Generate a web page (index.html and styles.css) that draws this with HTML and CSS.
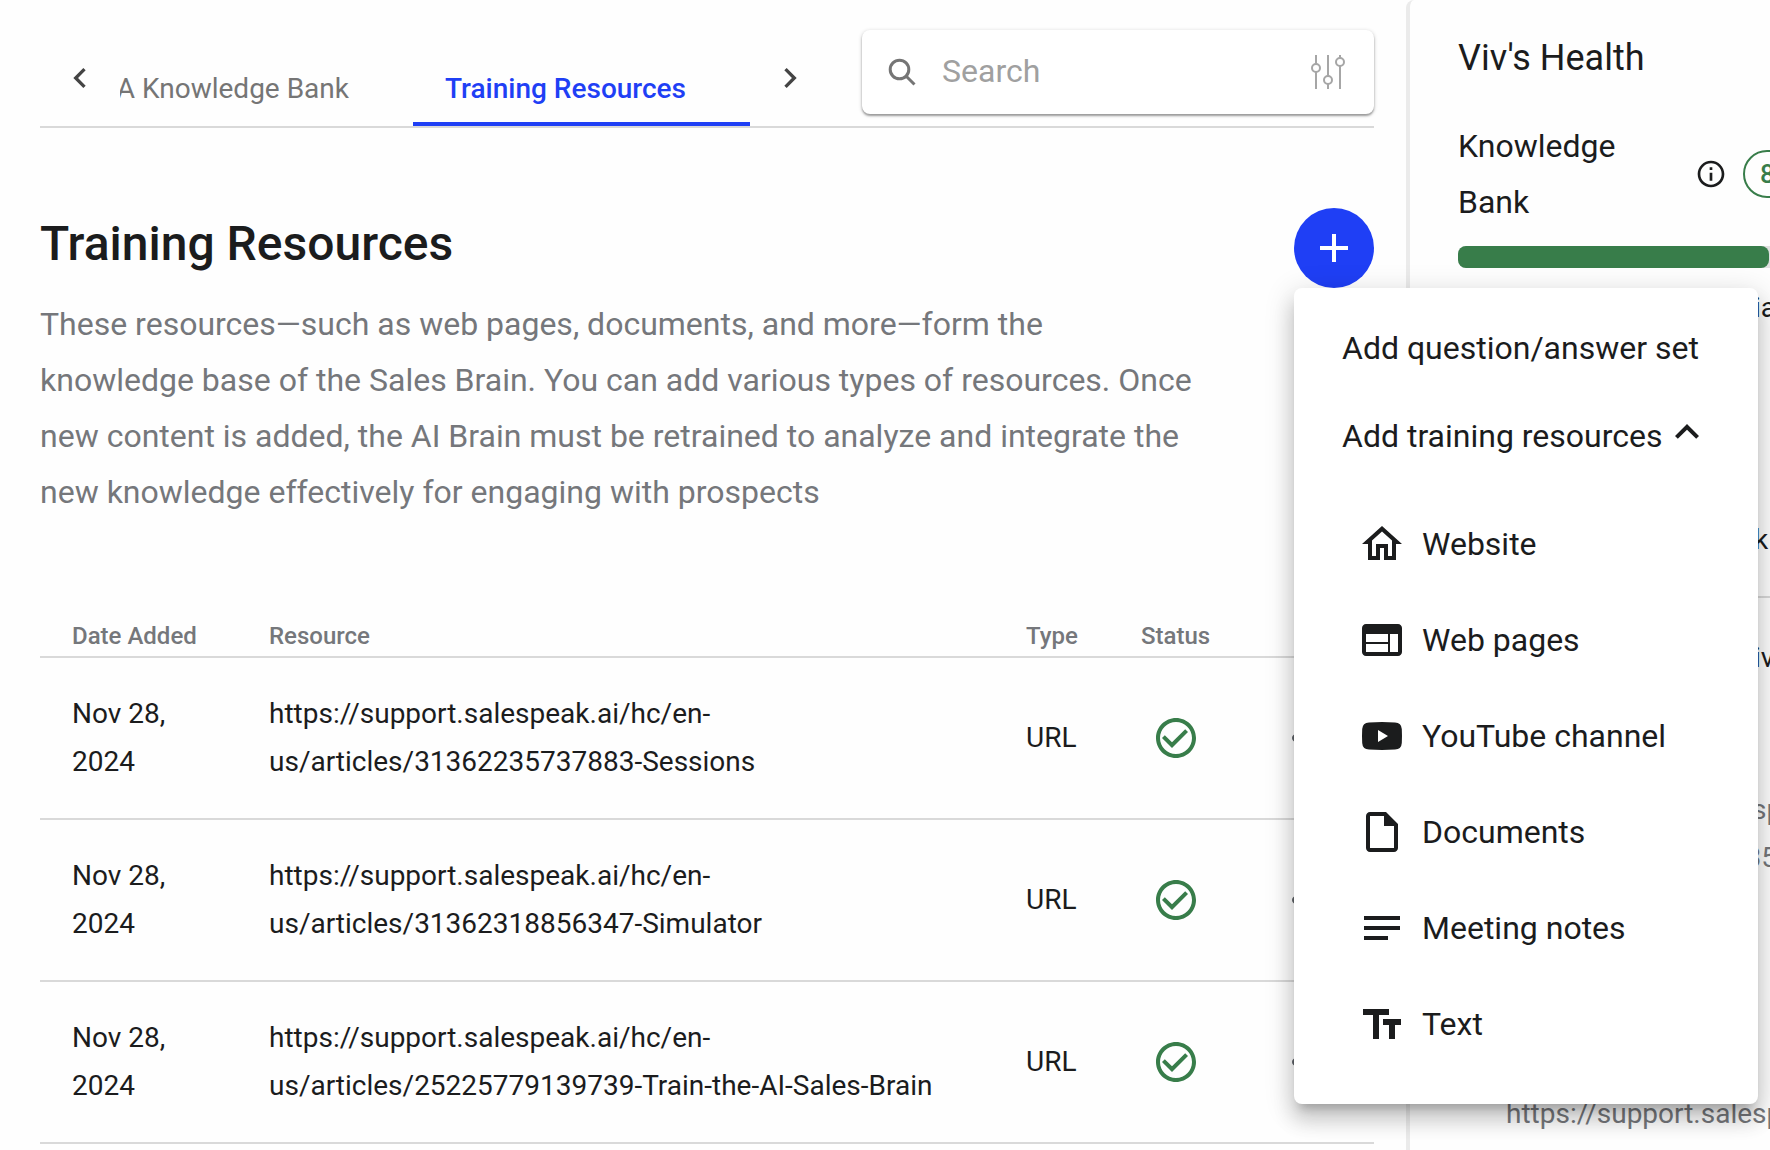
FILE: index.html
```html
<!DOCTYPE html>
<html lang="en">

<head>
    <meta charset="utf-8">
    <meta name="viewport" content="width=device-width, initial-scale=1.0">
    <title>Training Resources</title>
    <link rel="stylesheet" href="styles.css">
</head>

<body>
    <!-- shared icons -->
    <svg class="sprite" aria-hidden="true">
        <symbol id="check" viewBox="0 0 24 24">
            <path d="M16.59 7.58 10 14.17l-3.59-3.58L5 12l5 5 8-8zM12 2C6.48 2 2 6.48 2 12s4.48 10 10 10 10-4.48 10-10S17.52 2 12 2m0 18c-4.42 0-8-3.58-8-8s3.58-8 8-8 8 3.58 8 8-3.58 8-8 8" />
        </symbol>
        <symbol id="more" viewBox="0 0 24 24">
            <path d="M6 10c-1.1 0-2 .9-2 2s.9 2 2 2 2-.9 2-2-.9-2-2-2m12 0c-1.1 0-2 .9-2 2s.9 2 2 2 2-.9 2-2-.9-2-2-2m-6 0c-1.1 0-2 .9-2 2s.9 2 2 2 2-.9 2-2-.9-2-2-2" />
        </symbol>
    </svg>

    <div class="page">
        <main class="content">
            <header class="topbar">
                <nav class="tabs">
                    <button class="tab_arrow" aria-label="Previous tabs">
                        <svg viewBox="0 0 24 24"><path d="M15.41 16.59 10.83 12l4.58-4.59L14 6l-6 6 6 6z" /></svg>
                    </button>
                    <div class="tab_list">
                        <button class="tab">Q&amp;A Knowledge Bank</button>
                        <button class="tab active">Training Resources</button>
                    </div>
                    <button class="tab_arrow" aria-label="Next tabs">
                        <svg viewBox="0 0 24 24"><path d="M8.59 16.59 13.17 12 8.59 7.41 10 6l6 6-6 6z" /></svg>
                    </button>
                </nav>
                <div class="search">
                    <svg class="search_icon" viewBox="0 0 28 28">
                        <circle cx="11.5" cy="11.5" r="9.3" />
                        <path d="M18 18 26.500 26.500" />
                    </svg>
                    <input type="text" placeholder="Search" aria-label="Search">
                    <button class="filter" aria-label="Filters">
                        <svg viewBox="0 0 36 36">
                            <path d="M6 1v9M6 18v17M18 1v21M18 30v5M30 1v3M30 12v23" />
                            <circle cx="6" cy="14" r="4" />
                            <circle cx="18" cy="26" r="4" />
                            <circle cx="30" cy="8" r="4" />
                        </svg>
                    </button>
                </div>
            </header>

            <section class="intro">
                <div class="intro_text">
                    <h1>Training Resources</h1>
                    <p>These resources—such as web pages, documents, and more—form the knowledge base of the Sales Brain. You can add various types of resources. Once new content is added, the AI Brain must be retrained to analyze and integrate the new knowledge effectively for engaging with prospects</p>
                </div>
                <div class="add">
                    <button class="add_button" aria-label="Add">
                        <svg viewBox="0 0 28 28"><path d="M14 0v28M0 14h28" /></svg>
                    </button>
                    <div class="menu">
                        <button class="menu_item">Add question/answer set</button>
                        <button class="menu_item">Add training resources
                            <svg viewBox="0 0 24 24"><path d="M7.41 15.41 12 10.83l4.59 4.58L18 14l-6-6-6 6z" /></svg>
                        </button>
                        <div class="submenu">
                            <button class="submenu_item">
                                <svg viewBox="0 0 24 24"><path d="m12 5.69 5 4.5V18h-2v-6H9v6H7v-7.81zM12 3 2 12h3v8h6v-6h2v6h6v-8h3z" /></svg>
                                Website
                            </button>
                            <button class="submenu_item">
                                <svg viewBox="0 0 24 24"><path d="M20 4H4c-1.1 0-1.99.9-1.99 2L2 18c0 1.1.9 2 2 2h16c1.1 0 2-.9 2-2V6c0-1.1-.9-2-2-2M4 9h11v4H4zm0 9v-4h11v4zm16 0h-4V9h4z" /></svg>
                                Web pages
                            </button>
                            <button class="submenu_item">
                                <svg viewBox="0 0 24 24"><path d="M5.5 5.2Q12 4.800 18.500 5.200Q21.700 5.300 21.900 8.500Q22.100 12 21.900 15.500Q21.700 18.700 18.500 18.800Q12 19.200 5.500 18.800Q2.300 18.700 2.100 15.500Q1.900 12 2.100 8.500Q2.300 5.300 5.500 5.200zM10 9v6l5-3z" /></svg>
                                YouTube channel
                            </button>
                            <button class="submenu_item">
                                <svg viewBox="0 0 24 24"><path d="M14 2H6c-1.1 0-2 .9-2 2v16c0 1.1.9 2 2 2h12c1.1 0 2-.9 2-2V8zm4 18H6V4h7v5h5z" /></svg>
                                Documents
                            </button>
                            <button class="submenu_item">
                                <svg viewBox="0 0 24 24"><path d="M3 16h12v2H3zM3 6h18v2H3zM3 11h18v2H3z" /></svg>
                                Meeting notes
                            </button>
                            <button class="submenu_item">
                                <svg viewBox="0 0 24 24"><path d="M2.500 4.500v3h5v12h3v-12h5v-3zM21.500 9.500h-9v3h3v7h3v-7h3z" /></svg>
                                Text
                            </button>
                        </div>
                    </div>
                </div>
            </section>

            <table class="resources">
                <thead>
                    <tr>
                        <th class="date">Date Added</th>
                        <th>Resource</th>
                        <th class="type">Type</th>
                        <th class="status">Status</th>
                        <th class="actions"></th>
                    </tr>
                </thead>
                <tbody>
                    <tr>
                        <td class="date">Nov 28, 2024</td>
                        <td>https://support.salespeak.ai/hc/en-<wbr>us/articles/31362235737883-Sessions</td>
                        <td class="type">URL</td>
                        <td class="status"><svg><use href="#check" /></svg></td>
                        <td class="actions"><button aria-label="More"><svg><use href="#more" /></svg></button></td>
                    </tr>
                    <tr>
                        <td class="date">Nov 28, 2024</td>
                        <td>https://support.salespeak.ai/hc/en-<wbr>us/articles/31362318856347-Simulator</td>
                        <td class="type">URL</td>
                        <td class="status"><svg><use href="#check" /></svg></td>
                        <td class="actions"><button aria-label="More"><svg><use href="#more" /></svg></button></td>
                    </tr>
                    <tr>
                        <td class="date">Nov 28, 2024</td>
                        <td>https://support.salespeak.ai/hc/en-<wbr>us/articles/25225779139739-Train-the-AI-Sales-Brain</td>
                        <td class="type">URL</td>
                        <td class="status"><svg><use href="#check" /></svg></td>
                        <td class="actions"><button aria-label="More"><svg><use href="#more" /></svg></button></td>
                    </tr>
                </tbody>
            </table>
        </main>

        <aside class="health">
            <h2>Viv's Health</h2>
            <div class="score">
                <span class="score_name">Knowledge Bank</span>
                <svg viewBox="0 0 24 24"><path d="M11 7h2v2h-2zm0 4h2v6h-2zm1-9C6.480 2 2 6.480 2 12s4.480 10 10 10 10-4.480 10-10S17.520 2 12 2m0 18c-4.410 0-8-3.590-8-8s3.590-8 8-8 8 3.590 8 8-3.590 8-8 8" /></svg>
                <span class="chip">8</span>
            </div>
            <div class="bar">
                <div class="bar_fill"></div>
            </div>
            <p class="level">ia</p>
            <p class="task">k</p>
            <h3>iv</h3>
            <ul>
                <li>https://support.salespeak.ai/hc/en-<br>us/articles/31362235737883-Sessions</li>
                <li>https://support.salespeak.ai/hc/en-</li>
            </ul>
        </aside>
    </div>
</body>

</html>
```

FILE: styles.css
```css
* {
    box-sizing: border-box;
}

body {
    margin: 0;
    background-color: #fefefe;
    color: #1b1c1d;
    font-family: Roboto, "Liberation Sans", sans-serif;
    font-size: 28px;
    line-height: 48px;
}

h1,
h2,
h3,
p,
ul {
    margin: 0;
    padding: 0;
}

button {
    padding: 0;
    border: none;
    background: none;
    color: inherit;
    font: inherit;
    cursor: pointer;
}

svg {
    display: block;
    flex: none;
    fill: currentColor;
}

.sprite {
    position: absolute;
    width: 0;
    height: 0;
}

.page {
    display: flex;
    height: 100vh;
    overflow: hidden;
}

.content {
    flex: 1;
    min-width: 0;
    padding: 0 32px 0 40px;
}


/* ------- tabs and search -----------*/

.topbar {
    display: flex;
    align-items: flex-end;
    gap: 32px;
    padding-top: 30px;
    border-bottom: 2px solid #d9d9d9;
}

.tabs {
    display: flex;
    flex: 1;
    min-width: 0;
}

.tab_arrow {
    flex: none;
    display: flex;
    justify-content: center;
    width: 80px;
    padding-top: 28px;
    color: #444;
}

.tab_arrow svg {
    width: 40px;
    height: 40px;
}

.tab_list {
    flex: 1;
    display: flex;
    justify-content: flex-end;
    min-width: 0;
    overflow: hidden;
}

.tab {
    flex: none;
    height: 96px;
    padding: 26px 64px 0 32px;
    border-bottom: 4px solid transparent;
    color: #757575;
    white-space: nowrap;
}

.tab.active {
    border-color: #1f3ff5;
    color: #1f3ff5;
    font-weight: 500;
}

.search {
    flex: none;
    align-self: flex-start;
    display: flex;
    align-items: center;
    width: 512px;
    height: 84px;
    padding: 0 28px 0 26px;
    border-radius: 8px;
    background-color: #fff;
    box-shadow: 0 2px 2px rgba(0, 0, 0, 0.3), 0 1px 4px rgba(0, 0, 0, 0.2);
}

.search_icon {
    width: 28px;
    height: 28px;
    fill: none;
    stroke: #757575;
    stroke-width: 3;
}

.search input {
    flex: 1;
    min-width: 0;
    padding: 0 26px 2px;
    border: none;
    outline: none;
    background: none;
    font: inherit;
    font-size: 32px;
}

.search input::placeholder {
    color: #a0a0a0;
}

.filter svg {
    width: 36px;
    height: 36px;
    fill: none;
    stroke: #a6a6a6;
    stroke-width: 2;
}


/* ------- heading and add menu -----------*/

.intro {
    display: flex;
    justify-content: space-between;
    padding-top: 80px;
}

.intro_text {
    width: 1152px;
}

h1 {
    padding-bottom: 16px;
    font-size: 48px;
    font-weight: 500;
    line-height: 72px;
}

.intro_text p {
    color: #75777b;
    font-size: 32px;
    line-height: 56px;
}

.add {
    position: relative;
    flex: none;
}

.add_button {
    display: flex;
    align-items: center;
    justify-content: center;
    width: 80px;
    height: 80px;
    border-radius: 50%;
    background-color: #1f3ff5;
}

.add_button svg {
    width: 28px;
    height: 28px;
    stroke: #fff;
    stroke-width: 4;
}

.menu {
    position: absolute;
    top: 80px;
    left: 0;
    z-index: 1;
    width: 464px;
    padding: 16px 0;
    border-radius: 8px;
    background-color: #fff;
    font-size: 32px;
    box-shadow: 0 10px 10px -6px rgba(0, 0, 0, 0.2), 0 16px 20px 2px rgba(0, 0, 0, 0.14), 0 6px 28px 4px rgba(0, 0, 0, 0.12);
}

.menu svg {
    width: 48px;
    height: 48px;
}

.menu_item,
.submenu_item {
    display: flex;
    align-items: center;
    width: 100%;
    white-space: nowrap;
}

.menu_item {
    height: 88px;
    padding: 0 48px;
}

.menu_item svg {
    padding-bottom: 8px;
    height: 56px;
}

.submenu {
    padding: 16px 0;
}

.submenu_item {
    gap: 16px;
    height: 96px;
    padding: 0 64px;
}


/* ------- table -----------*/

.resources {
    width: 100%;
    margin-top: 91px;
    border-collapse: collapse;
    table-layout: fixed;
}

th,
td {
    padding: 0 16px;
    border-bottom: 2px solid #d9d9d9;
    text-align: left;
}

th {
    height: 46px;
    padding-top: 4px;
    color: #75777b;
    font-size: 24px;
    font-weight: 500;
    line-height: 40px;
}

td {
    height: 162px;
}

.date {
    width: 213px;
    padding-left: 32px;
}

td.date {
    padding-right: 60px;
}

.type {
    width: 115px;
}

.status {
    width: 102px;
}

.status svg {
    width: 48px;
    height: 48px;
    margin: 0 auto;
    color: #387d4a;
}

.actions {
    width: 147px;
    padding-left: 57px;
    color: #5f6368;
}

.actions button {
    display: block;
}

.actions svg {
    width: 48px;
    height: 48px;
}


/* ------- health panel -----------*/

.health {
    flex: none;
    width: 364px;
    padding: 30px 0 0 48px;
    border-left: 4px solid #ebebeb;
    border-top-left-radius: 8px;
    overflow: hidden;
    white-space: nowrap;
}

h2 {
    font-size: 36px;
    font-weight: 400;
    line-height: 56px;
}

.score {
    display: flex;
    align-items: center;
    padding-top: 32px;
}

.score svg {
    width: 32px;
    height: 32px;
    margin-right: 16px;
}

.score_name {
    flex: none;
    width: 237px;
    padding-right: 60px;
    font-size: 32px;
    line-height: 56px;
    white-space: normal;
}

.chip {
    flex: none;
    width: 96px;
    height: 48px;
    padding-left: 15px;
    border: 2px solid #387d4a;
    border-radius: 24px;
    color: #387d4a;
    font-size: 26px;
    font-weight: 500;
    line-height: 44px;
}

.bar {
    width: 352px;
    margin-top: 16px;
    border-radius: 8px;
    background-color: #e0e0e0;
}

.bar_fill {
    width: 311px;
    height: 22px;
    border-radius: 8px;
    background-color: #387d4a;
}

.level {
    padding: 16px 0 0 296px;
}

.task {
    padding: 184px 0 32px 296px;
    border-bottom: 2px solid #d9d9d9;
}

h3 {
    padding: 36px 0 0 296px;
    font-size: 28px;
    font-weight: 400;
}

ul {
    padding: 104px 0 0 48px;
    color: #75777b;
    list-style: none;
}

li {
    padding-bottom: 208px;
}
```
